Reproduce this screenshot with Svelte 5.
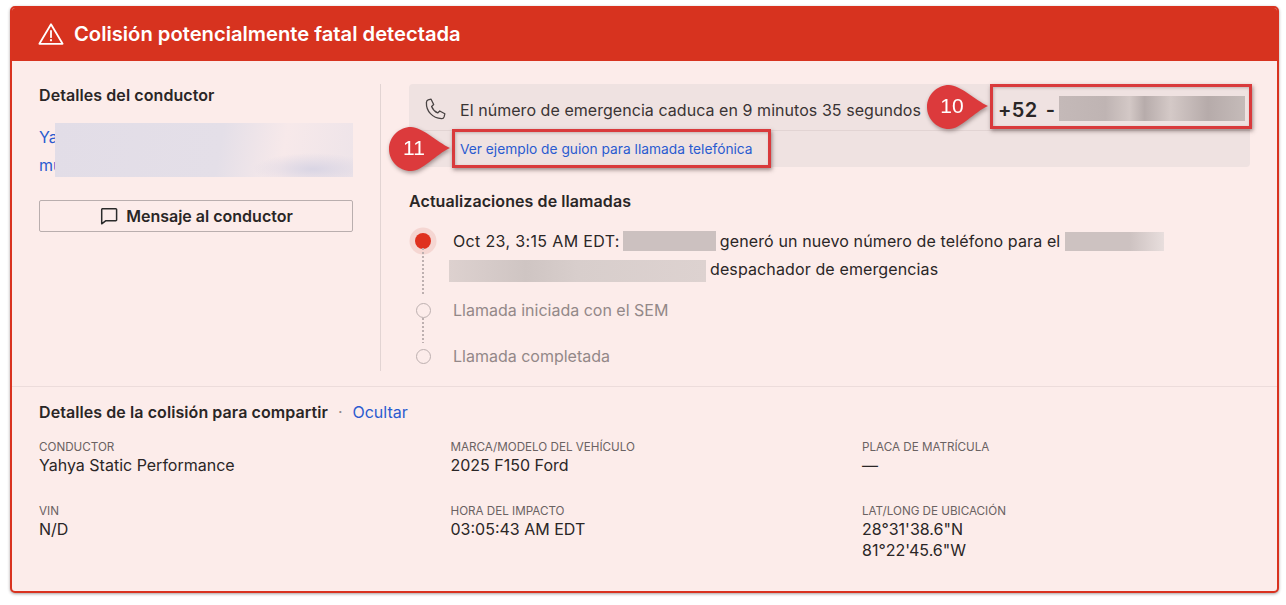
<script>
  const fields = [
    { label: 'Conductor', lines: ['Yahya Static Performance'] },
    { label: 'Marca/modelo del vehículo', lines: ['2025 F150 Ford'] },
    { label: 'Placa de matrícula', lines: ['—'] },
    { label: 'VIN', lines: ['N/D'] },
    { label: 'Hora del impacto', lines: ['03:05:43 AM EDT'] },
    { label: 'Lat/long de ubicación', lines: ['28°31\'38.6"N', '81°22\'45.6"W'] }
  ];
</script>

<div class="page">
  <section class="card">
    <header class="head">
      <svg class="warn" viewBox="0 0 26 24" width="26" height="24" fill="none" stroke="#fff" stroke-width="1.8" stroke-linejoin="round" stroke-linecap="round">
        <path d="M13 2.2 24.6 21.8H1.4Z" />
        <path d="M13 9v6.2" />
        <path d="M13 18.2v.1" stroke-width="2.2" />
      </svg>
      <h1>Colisión potencialmente fatal detectada</h1>
    </header>

    <div class="main">
      <aside class="driver">
        <h2>Detalles del conductor</h2>
        <div class="contact">
          <a href="#top">Ya</a>
          <a href="#top">mu</a>
          <span class="blur blur-contact"></span>
        </div>
        <button type="button" class="msg">
          <svg viewBox="0 0 20 20" width="20" height="20" fill="none" stroke="#2b2b2b" stroke-width="1.5" stroke-linejoin="round">
            <path d="M3.400 2.800h13.400a.8.8 0 0 1 .8.8v10.400a.8.8 0 0 1-.8.8H6.600l-3.900 3V3.600a.8.8 0 0 1 .7-.8Z" />
          </svg>
          Mensaje al conductor
        </button>
      </aside>

      <div class="calls">
        <div class="panel">
          <div class="panel-top">
            <svg class="phone" viewBox="0 0 24 24" width="26" height="26" fill="none" stroke="#4a4444" stroke-width="1.2" stroke-linejoin="round">
              <path d="M6.600 2.600 9.300 2l2.400 5-1.900 1.700c1 2.600 3 4.800 5.600 6l1.900-1.800 4.700 2.600-.7 2.900c-.3 1-1.200 1.700-2.300 1.600C10.600 19.300 4.700 13.200 5 5c0-1.100.6-2 1.600-2.400Z" />
            </svg>
            <span class="expire">El número de emergencia caduca en 9 minutos 35 segundos</span>
            <span class="number"><span class="code">+52</span><span class="dash">-</span><span class="blur blur-phone"></span></span>
          </div>
          <div class="panel-bottom">
            <a href="#top">Ver ejemplo de guion para llamada telefónica</a>
          </div>
        </div>

        <h2 class="updates">Actualizaciones de llamadas</h2>
        <ol class="timeline">
          <li class="step active">
            <span class="dot"></span>
            <p><span class="stamp">Oct 23, 3:15 AM EDT:</span><span class="blur blur-a"></span>generó un nuevo número de teléfono para el<span class="blur blur-b"></span><br /><span class="blur blur-c"></span>despachador de emergencias</p>
          </li>
          <li class="step pending">
            <span class="dot"></span>
            <p>Llamada iniciada con el SEM</p>
          </li>
          <li class="step pending last">
            <span class="dot"></span>
            <p>Llamada completada</p>
          </li>
        </ol>
      </div>
    </div>

    <footer class="details">
      <div class="details-head">
        <h2>Detalles de la colisión para compartir</h2>
        <span class="sep">·</span>
        <a href="#top">Ocultar</a>
      </div>
      <dl class="grid">
        {#each fields as f}
          <div class="field">
            <dt>{f.label}</dt>
            {#each f.lines as line}
              <dd>{line}</dd>
            {/each}
          </div>
        {/each}
      </dl>
    </footer>
  </section>

  <div class="frame frame-10"></div>
  <div class="frame frame-11"></div>

  <div class="callout callout-10">
    <svg viewBox="0 0 62 44" width="62" height="44"><path d="M22 0C33 0 48 15 61 21 47 27 34 44 22 44 10 44 0 34 0 22S10 0 22 0Z" fill="#dc3a3c" /></svg>
    <span>10</span>
  </div>
  <div class="callout callout-11">
    <svg viewBox="0 0 62 44" width="62" height="44"><path d="M22 0C33 0 48 15 61 21 47 27 34 44 22 44 10 44 0 34 0 22S10 0 22 0Z" fill="#dc3a3c" /></svg>
    <span>11</span>
  </div>
</div>

<style>
  :global(body) {
    margin: 0;
    background: #fff;
  }

  .page {
    position: relative;
    width: 1286px;
    height: 605px;
    padding: 6px 7px 0 10px;
    box-sizing: border-box;
    overflow: hidden;
    font-family: Inter, "Liberation Sans", sans-serif;
    color: #2a2626;
  }

  .card {
    height: 587px;
    box-sizing: border-box;
    border: 2px solid #d9321f;
    border-radius: 5px;
    background: #fcecea;
    box-shadow: 0 1px 3px rgba(60, 40, 40, 0.45);
    display: flex;
    flex-direction: column;
    overflow: hidden;
  }

  .head {
    height: 53px;
    box-sizing: border-box;
    padding-bottom: 2px;
    flex: none;
    background: #d7331f;
    color: #fff;
    display: flex;
    align-items: center;
    gap: 10px;
    padding-left: 26px;
  }

  .head h1 {
    margin: 0;
    font-size: 20.2px;
    font-weight: 600;
  }

  .warn {
    flex: none;
  }

  h2 {
    margin: 0;
    font-size: 16px;
    font-weight: 600;
    letter-spacing: 0.08px;
    color: #2a2626;
  }

  a {
    color: #2a5bd0;
    text-decoration: none;
  }

  .main {
    height: 325px;
    flex: none;
    display: flex;
    border-bottom: 1px solid #ecdcdb;
  }

  .driver {
    width: 314px;
    padding: 24px 27px 0;
    flex: none;
  }

  .contact {
    position: relative;
    margin-top: 18px;
    display: flex;
    flex-direction: column;
    font-size: 16px;
    line-height: 28px;
  }

  .blur {
    display: inline-block;
    vertical-align: middle;
  }

  .blur-contact {
    position: absolute;
    left: 16px;
    top: 0;
    width: 298px;
    height: 54px;
    background:
      radial-gradient(ellipse 60px 16px at 258px 46px, #d9d5e4, transparent),
      linear-gradient(100deg, #e2dde7 0%, #e4dfe8 55%, #f7e9ea 76%, #eee4e9 100%);
  }

  .msg {
    width: 100%;
    height: 32px;
    margin-top: 21px;
    display: flex;
    align-items: center;
    justify-content: center;
    gap: 7px;
    background: transparent;
    border: 1px solid #b9aeae;
    border-radius: 2px;
    font: 600 16px Inter, "Liberation Sans", sans-serif;
    color: #2a2626;
    padding: 0;
  }

  .calls {
    flex: 1;
    margin-top: 23px;
    height: 287px;
    border-left: 1px solid #e2d4d3;
    padding-left: 28px;
    padding-right: 28px;
  }

  .panel {
    background: #efe2e1;
    border-radius: 4px;
    height: 83px;
    margin-right: -1px;
  }

  .panel-top {
    height: 47px;
    box-sizing: border-box;
    border-bottom: 1px solid #e2d4d3;
    display: flex;
    align-items: center;
    padding-left: 12px;
    padding-top: 3px;
    font-size: 16px;
  }

  .phone {
    flex: none;
    margin-right: 13px;
    margin-top: 3px;
  }

  .expire {
    color: #3a3434;
    white-space: nowrap;
    letter-spacing: 0.05px;
    padding-top: 3px;
  }

  .number {
    margin-left: auto;
    margin-right: 5px;
    display: flex;
    align-items: center;
    font-size: 20px;
    font-weight: 600;
    color: #2a2626;
    white-space: nowrap;
  }

  .code {
    letter-spacing: 0.4px;
    margin-right: 8px;
    padding-top: 3px;
  }

  .dash {
    margin-right: 4px;
    padding-top: 3px;
  }

  .blur-phone {
    width: 186px;
    height: 25px;
    background: linear-gradient(90deg, #c4b9b8, #bfb4b3 25%, #d3c8c6 38%, #b7acab 46%, #d4c9c7 60%, #b6abaa 80%, #c5bbb9);
  }

  .panel-bottom {
    height: 36px;
    display: flex;
    align-items: center;
    padding-left: 51px;
    font-size: 13.75px;
  }

  .updates {
    margin-top: 24px;
  }

  .timeline {
    list-style: none;
    margin: 13px 0 0;
    padding: 0;
  }

  .step {
    position: relative;
    padding-left: 44px;
    font-size: 16px;
  }

  .step p {
    margin: 0;
    line-height: 28px;
  }

  .stamp {
    letter-spacing: 0.35px;
  }

  .active p {
    letter-spacing: 0.12px;
    white-space: nowrap;
    color: #2a2626;
  }

  .step.active {
    height: 72px;
    padding-top: 3px;
    box-sizing: border-box;
  }

  .step.pending {
    height: 46px;
    color: #938888;
  }

  .step:not(.last)::after {
    content: "";
    position: absolute;
    left: 13px;
    top: 24px;
    width: 2px;
    height: 48px;
    background: repeating-linear-gradient(180deg, #bdb0b0 0 2px, transparent 2px 4px);
  }

  .step.pending:not(.last)::after {
    top: 22px;
    height: 25px;
  }

  .dot {
    position: absolute;
    box-sizing: border-box;
    border-radius: 50%;
  }

  .active .dot {
    left: 6px;
    top: 9px;
    width: 16px;
    height: 16px;
    background: #df3220;
    box-shadow: 0 0 0 5.5px #f5d6d2;
  }

  .pending .dot {
    left: 7px;
    top: 7px;
    width: 15px;
    height: 15px;
    border: 1.3px solid #bdb0b0;
    background: #fcecea;
  }

  .blur-a {
    width: 93px;
    height: 20px;
    margin: -3px 4px 0 3px;
    background: #ccc1c0;
  }

  .blur-b {
    width: 99px;
    height: 19px;
    margin: -3px 0 0 5px;
    background: linear-gradient(90deg, #cdc2c1, #cdc2c1 65%, #e8dedd);
  }

  .blur-c {
    width: 257px;
    height: 22px;
    margin: 0 4px 0 -4px;
    background: linear-gradient(90deg, #ddd1cf, #cfc5c3 30%, #d8cecc 50%, #ddd2d0);
  }

  .details {
    padding: 15px 27px 0;
  }

  .details-head {
    display: flex;
    align-items: center;
    font-size: 16px;
  }

  .sep {
    margin: 0 10px;
    color: #938888;
  }

  .grid {
    margin: 18px 0 0;
    display: grid;
    grid-template-columns: repeat(3, 411.5px);
    grid-template-rows: 64px auto;
  }

  dt {
    font-size: 11.65px;
    line-height: 15px;
    text-transform: uppercase;
    color: #6a6262;
  }

  dd {
    margin: 0;
    font-size: 16px;
    line-height: 21px;
    color: #2a2626;
  }

  .frame {
    position: absolute;
    box-sizing: border-box;
    border: 3px solid #d93a3c;
    box-shadow: 1px 2px 4px rgba(60, 40, 40, 0.5), inset 1px 1px 3px rgba(60, 40, 40, 0.25);
  }

  .frame-10 {
    left: 990px;
    top: 84px;
    width: 262px;
    height: 45px;
  }

  .frame-11 {
    left: 452px;
    top: 129px;
    width: 319px;
    height: 39px;
  }

  .callout {
    position: absolute;
    width: 62px;
    height: 44px;
    filter: drop-shadow(1px 2px 2px rgba(60, 40, 40, 0.45));
  }

  .callout span {
    position: absolute;
    left: 0;
    top: 0;
    width: 50px;
    text-align: center;
    color: #fff;
    font: 21px/42px "Liberation Sans", Arial, sans-serif;
  }

  .callout svg {
    display: block;
  }

  .callout-10 {
    left: 927px;
    top: 85px;
  }

  .callout-11 {
    left: 389px;
    top: 127px;
  }
</style>
